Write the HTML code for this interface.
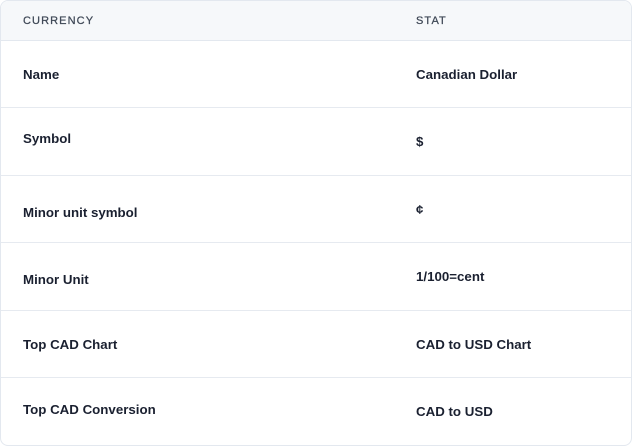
<!DOCTYPE html>
<html><head><style>
body{margin:0;background:#fff;font-family:"Liberation Sans",sans-serif;}
.card{position:absolute;left:0;top:0;width:630px;height:444px;border:1px solid #e3e8ef;border-radius:8px;overflow:hidden;background:#fff}
.hd{position:absolute;left:0;top:0;width:100%;height:39px;background:#f6f8fa;border-bottom:1px solid #e3e8ef}
.line{position:absolute;left:0;width:100%;height:1px;background:#e6eaf0}
.t{position:absolute;font-size:13.3px;font-weight:bold;color:#1a2030;line-height:16px}
.h{position:absolute;font-size:11px;letter-spacing:1.1px;color:#3f4856;line-height:12px;top:14px;-webkit-text-stroke:0.25px #3f4856}
</style></head><body>
<div class="card">
<div class="hd"></div>
<div class="h" style="left:22px">CURRENCY</div>
<div class="h" style="left:415px">STAT</div>
<div class="line" style="top:106px"></div>
<div class="line" style="top:174px"></div>
<div class="line" style="top:241px"></div>
<div class="line" style="top:309px"></div>
<div class="line" style="top:376px"></div>
<div class="t" style="left:22px;top:66px">Name</div>
<div class="t" style="left:415px;top:66px">Canadian Dollar</div>
<div class="t" style="left:22px;top:130px">Symbol</div>
<div class="t" style="left:415px;top:133px">$</div>
<div class="t" style="left:22px;top:204px">Minor unit symbol</div>
<div class="t" style="left:415px;top:201px">¢</div>
<div class="t" style="left:22px;top:271px">Minor Unit</div>
<div class="t" style="left:415px;top:268px">1/100=cent</div>
<div class="t" style="left:22px;top:336px">Top CAD Chart</div>
<div class="t" style="left:415px;top:336px">CAD to USD Chart</div>
<div class="t" style="left:22px;top:401px">Top CAD Conversion</div>
<div class="t" style="left:415px;top:403px">CAD to USD</div>
</div>
</body></html>
